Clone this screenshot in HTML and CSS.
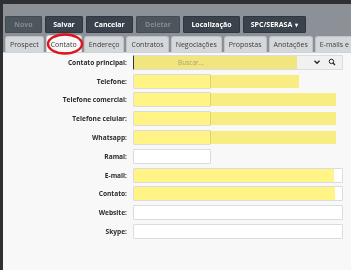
FILE: index.html
```html
<!DOCTYPE html>
<html lang="pt-BR">
<head>
<meta charset="utf-8">
<link rel="stylesheet" href="styles.css">
</head>
<body>
<div class="app">
  <div class="toolbar">
    <button class="btn disabled w-novo">Novo</button>
    <button class="btn w-salvar">Salvar</button>
    <button class="btn w-cancelar">Cancelar</button>
    <button class="btn disabled w-deletar">Deletar</button>
    <button class="btn w-local">Localização</button>
    <button class="btn w-spc">SPC/SERASA <span class="caret">▾</span></button>
  </div>
  <div class="tabs">
    <div class="tab">Prospect</div>
    <div class="tab active">Contato</div>
    <div class="tab">Endereço</div>
    <div class="tab">Contratos</div>
    <div class="tab">Negociações</div>
    <div class="tab">Propostas</div>
    <div class="tab">Anotações</div>
    <div class="tab last">E-mails e</div>
  </div>
  <svg class="circle" width="40" height="24" viewBox="0 0 40 24"><ellipse cx="20" cy="12" rx="17" ry="9.5" fill="none" stroke="#e0121b" stroke-width="2.4"/></svg>
  <div class="content">
    <div class="form">
      <div class="row">
        <label class="lbl">Contato principal:</label>
        <div class="field">
          <div class="box select">
            <span class="ph">Buscar...</span>
            <span class="addon">
              <svg width="8" height="8" viewBox="0 0 8 8"><path d="M1.5 2.8 L4 5.3 L6.5 2.8" fill="none" stroke="#222" stroke-width="1.3"/></svg>
              <svg width="8" height="8" viewBox="0 0 8 8"><circle cx="3.4" cy="3.4" r="2.2" fill="none" stroke="#222" stroke-width="1"/><path d="M5 5 L7 7" stroke="#222" stroke-width="1.2"/></svg>
            </span>
          </div>
          <div class="hl" style="width:163px"></div>
        </div>
      </div>
      <div class="row">
        <label class="lbl">Telefone:</label>
        <div class="field"><div class="box short"></div><div class="hl" style="width:165px"></div></div>
      </div>
      <div class="row">
        <label class="lbl">Telefone comercial:</label>
        <div class="field"><div class="box short"></div><div class="hl" style="width:202px"></div></div>
      </div>
      <div class="row">
        <label class="lbl">Telefone celular:</label>
        <div class="field"><div class="box short"></div><div class="hl" style="width:202px"></div></div>
      </div>
      <div class="row">
        <label class="lbl">Whatsapp:</label>
        <div class="field"><div class="box short"></div><div class="hl" style="width:202px"></div></div>
      </div>
      <div class="row">
        <label class="lbl">Ramal:</label>
        <div class="field"><div class="box short"></div></div>
      </div>
      <div class="row">
        <label class="lbl">E-mail:</label>
        <div class="field"><div class="box"></div><div class="hl" style="width:200px"></div></div>
      </div>
      <div class="row">
        <label class="lbl">Contato:</label>
        <div class="field"><div class="box"></div><div class="hl" style="width:201px"></div></div>
      </div>
      <div class="row">
        <label class="lbl">Website:</label>
        <div class="field"><div class="box"></div></div>
      </div>
      <div class="row">
        <label class="lbl">Skype:</label>
        <div class="field"><div class="box"></div></div>
      </div>
    </div>
  </div>
</div>
</body>
</html>
```
FILE: styles.css
```css
* { box-sizing: border-box; }
html, body { margin: 0; padding: 0; }
body {
  background: #2e3033;
  width: 351px;
  height: 270px;
  overflow: hidden;
  font-family: "Open Sans", "Noto Sans", sans-serif;
}
.app {
  position: relative;
  margin: 4px 0 0 3px;
  height: 266px;
  background: #8b9197;
  display: flex;
  flex-direction: column;
}
.toolbar {
  display: flex;
  gap: 3px;
  padding: 12px 0 0 2px;
  height: 31px;
}
.btn {
  height: 17px;
  border: 1px solid #2f373e;
  background: #3a434b;
  color: #fff;
  font-family: inherit;
  font-weight: 700;
  font-size: 7px;
  padding: 0;
  border-radius: 1px;
  display: flex;
  align-items: center;
  justify-content: center;
}
.btn.disabled { background: #4d555d; color: #848b92; border-color: #434a51; }
.caret { font-size: 6px; margin-left: 3px; }
.w-novo { width: 37px; }
.w-salvar { width: 38px; }
.w-cancelar { width: 47px; }
.w-deletar { width: 44px; }
.w-local { width: 57px; }
.w-spc { width: 63px; }
.tabs {
  display: flex;
  gap: 2px;
  padding-left: 2px;
  height: 17px;
  align-items: flex-end;
  white-space: nowrap;
  overflow: hidden;
  position: relative;
  z-index: 1;
}
.tab {
  height: 16px;
  padding: 0 4px;
  background: #d5d8db;
  border: 1px solid #bfc3c7;
  border-bottom: none;
  border-radius: 3px 3px 0 0;
  font-size: 7px;
  color: #3a3a3a;
  display: flex;
  align-items: center;
}
.tab.last { flex: 1; min-width: 0; border-right: none; border-radius: 3px 0 0 0; }
.tab.active {
  background: #f8f8f8;
  height: 17px;
  border-color: #cfd2d5;
}
.circle {
  position: absolute;
  left: 42px;
  top: 28px;
  z-index: 2;
}
.content {
  flex: 1;
  background: #f8f8f8;
  border-top: 1px solid #cfd2d5;
}
.form {
  display: flex;
  flex-direction: column;
}
.row {
  height: 18.8px;
  display: flex;
  align-items: center;
  gap: 6px;
}
.lbl {
  width: 124px;
  text-align: right;
  font-weight: 700;
  font-size: 6.6px;
  color: #2b2b2b;
}
.field {
  position: relative;
  width: 210px;
  height: 15px;
}
.box {
  height: 15px;
  width: 210px;
  background: #fff;
  border: 1px solid #dcdcdc;
  border-radius: 1px;
}
.box.short { width: 78px; }
.box.select {
  display: flex;
  align-items: center;
  background: #f1f1f1;
  border-left: 1px solid #333;
}
.ph {
  font-size: 6.5px;
  color: #a9a27a;
  margin-left: 44px;
  position: relative;
  z-index: 1;
  flex: 1;
}
.addon {
  display: flex;
  gap: 7px;
  padding-right: 6px;
  align-items: center;
}
.hl {
  position: absolute;
  left: 1px;
  top: 1px;
  height: 13px;
  background: #fff47e;
  mix-blend-mode: multiply;
  opacity: 0.95;
}
```
